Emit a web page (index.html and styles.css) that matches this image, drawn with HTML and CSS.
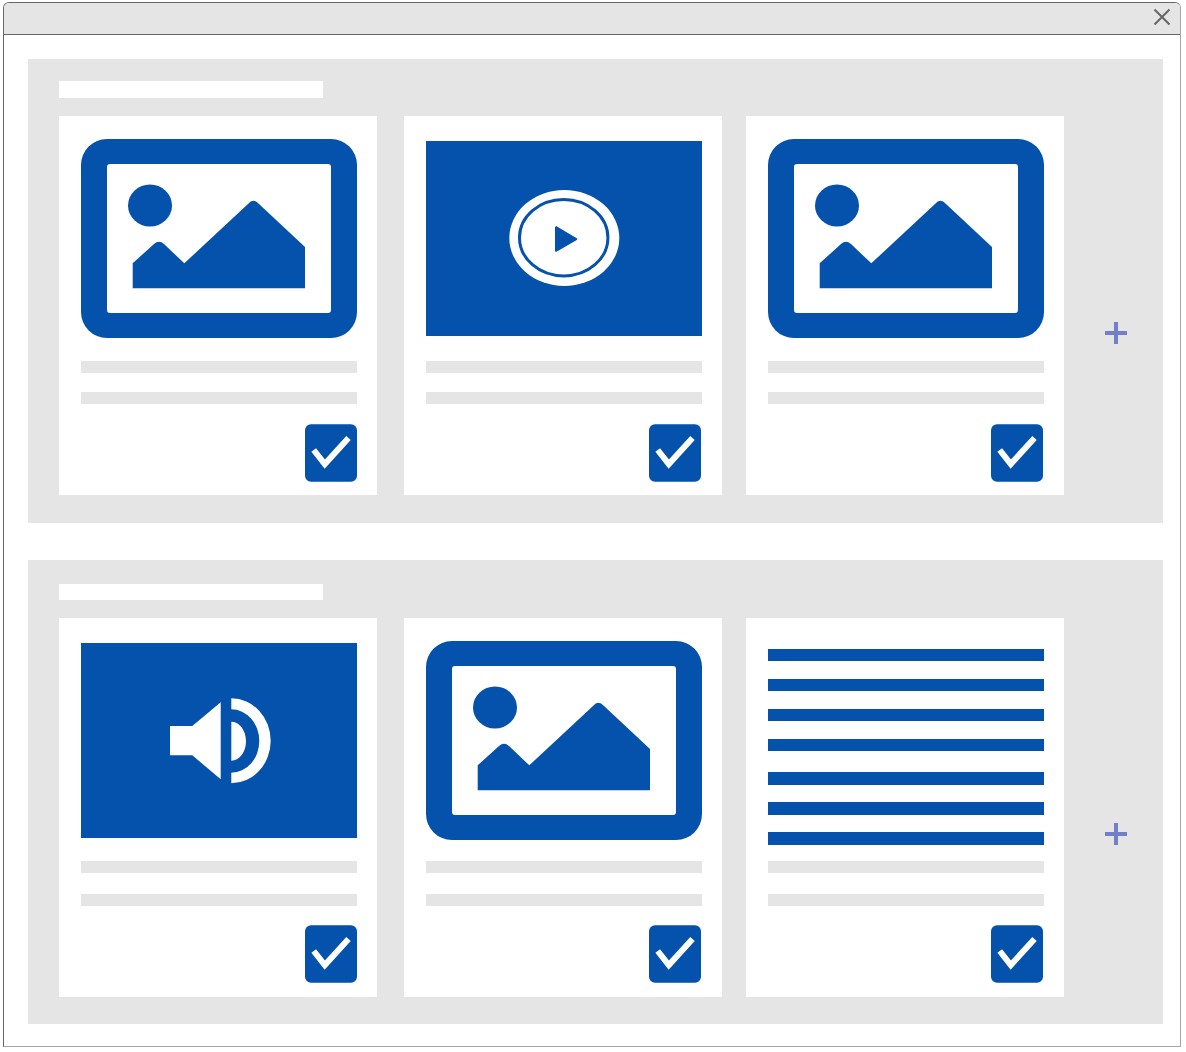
FILE: index.html
```html
<!DOCTYPE html>
<html lang="en">
<head>
    <meta charset="UTF-8">
    <title>Media picker</title>
    <link rel="stylesheet" href="styles.css">
</head>
<body>
    <svg class="sprites" width="0" height="0">
        <symbol id="icon-image" viewBox="0 0 276 199">
            <path fill="#0552ac" fill-rule="evenodd" d="M26 0H250A26 26 0 0 1 276 26V173A26 26 0 0 1 250 199H26A26 26 0 0 1 0 173V26A26 26 0 0 1 26 0ZM29 25A3 3 0 0 0 26 28V171A3 3 0 0 0 29 174H247A3 3 0 0 0 250 171V28A3 3 0 0 0 247 25Z"/>
            <ellipse fill="#0552ac" cx="69" cy="66.5" rx="22" ry="21"/>
            <path fill="#0552ac" d="M51.7 124.3L73 105Q78 100.5 83 105L103.3 124.3L167 65Q172.3 58.5 178 65L224 108V149.3H51.7Z"/>
        </symbol>
        <symbol id="icon-check" viewBox="0 0 52 58">
            <rect fill="#0552ac" y="0.3" width="52" height="57.5" rx="6"/>
            <path fill="none" stroke="#fff" stroke-width="6" d="M8.7 26L19.8 40L43.5 14"/>
        </symbol>
        <symbol id="icon-plus" viewBox="0 0 22 22">
            <path fill="#7180c8" d="M9 0H13V9H22V13H13V22H9V13H0V9H9Z"/>
        </symbol>
    </svg>

    <div class="window">
        <div class="titlebar">
            <svg class="close" width="18" height="18" viewBox="0 0 18 18">
                <path fill="none" stroke="#666" stroke-width="2" d="M1.5 1.5L16.5 16.5M16.5 1.5L1.5 16.5"/>
            </svg>
        </div>

        <div class="section section-a">
            <div class="section-title"></div>
            <div class="card-row">
                <div class="card">
                    <div class="media">
                        <svg class="media-icon" width="276" height="199"><use href="#icon-image"/></svg>
                    </div>
                    <div class="bars"><div class="bar"></div><div class="bar"></div></div>
                    <svg class="check" width="52" height="58"><use href="#icon-check"/></svg>
                </div>
                <div class="card card-middle">
                    <div class="media">
                        <svg class="media-block" width="276" height="195" viewBox="0 0 276 195">
                            <rect fill="#0552ac" width="276" height="195"/>
                            <ellipse fill="#fff" cx="138.3" cy="97" rx="55" ry="48"/>
                            <ellipse fill="none" stroke="#0552ac" stroke-width="3" cx="137.7" cy="96.7" rx="44.2" ry="38.2"/>
                            <polygon fill="#0552ac" stroke="#0552ac" stroke-width="2" stroke-linejoin="round" points="130,86.2 130,109.8 150.3,98.2"/>
                        </svg>
                    </div>
                    <div class="bars"><div class="bar"></div><div class="bar"></div></div>
                    <svg class="check" width="52" height="58"><use href="#icon-check"/></svg>
                </div>
                <div class="card">
                    <div class="media">
                        <svg class="media-icon" width="276" height="199"><use href="#icon-image"/></svg>
                    </div>
                    <div class="bars"><div class="bar"></div><div class="bar"></div></div>
                    <svg class="check" width="52" height="58"><use href="#icon-check"/></svg>
                </div>
                <svg class="plus" width="22" height="22"><use href="#icon-plus"/></svg>
            </div>
        </div>

        <div class="section section-b">
            <div class="section-title"></div>
            <div class="card-row">
                <div class="card">
                    <div class="media">
                        <svg class="media-block" width="276" height="195" viewBox="0 0 276 195">
                            <rect fill="#0552ac" width="276" height="195"/>
                            <path fill="#fff" d="M89 83H111.3L139.7 59.3V136.3L111.3 112.3H89Z"/>
                            <path fill="#fff" d="M150.3 55.3A39.4 42.5 0 0 1 150.3 140.3V129.7A28 31.7 0 0 0 150.3 66.3Z"/>
                            <path fill="#fff" d="M150.3 78.7A14.7 19.5 0 0 1 150.3 117.7Z"/>
                        </svg>
                    </div>
                    <div class="bars"><div class="bar"></div><div class="bar"></div></div>
                    <svg class="check" width="52" height="58"><use href="#icon-check"/></svg>
                </div>
                <div class="card card-middle">
                    <div class="media">
                        <svg class="media-icon" width="276" height="199"><use href="#icon-image"/></svg>
                    </div>
                    <div class="bars"><div class="bar"></div><div class="bar"></div></div>
                    <svg class="check" width="52" height="58"><use href="#icon-check"/></svg>
                </div>
                <div class="card">
                    <div class="media doc">
                        <div class="doc-line"></div>
                        <div class="doc-line"></div>
                        <div class="doc-line"></div>
                        <div class="doc-line"></div>
                        <div class="doc-line"></div>
                        <div class="doc-line"></div>
                        <div class="doc-line"></div>
                    </div>
                    <div class="bars"><div class="bar"></div><div class="bar"></div></div>
                    <svg class="check" width="52" height="58"><use href="#icon-check"/></svg>
                </div>
                <svg class="plus" width="22" height="22"><use href="#icon-plus"/></svg>
            </div>
        </div>
    </div>
</body>
</html>
```

FILE: styles.css
```css
body {
    margin: 0;
    background-color: #fff;
    font-family: "Liberation Sans", Arial, sans-serif;
}
.sprites {
    display: block;
    height: 0;
}
.window {
    box-sizing: border-box;
    width: 1178px;
    height: 1045px;
    margin: 2px 0 0 3px;
    border: 1px solid #666;
    border-right-color: #a6a6a6;
    border-bottom-color: #a6a6a6;
    border-radius: 6px 6px 0 0;
    overflow: hidden;
}
.titlebar {
    box-sizing: border-box;
    height: 32px;
    background-color: #e5e5e5;
    border-bottom: 1px solid #666;
    display: flex;
    justify-content: flex-end;
    align-items: flex-start;
    padding: 5px 9.5px 0 0;
}
.close {
    display: block;
}
.section {
    box-sizing: border-box;
    width: 1135px;
    height: 464px;
    margin: 24px 0 0 24px;
    padding: 22px 0 0 30.7px;
    background-color: #e5e5e5;
}
.section-b {
    margin-top: 37px;
    padding-top: 23.7px;
}
.section-title {
    width: 264.6px;
    height: 16.7px;
    background-color: #fff;
    margin-bottom: 18.3px;
}
.section-b .section-title {
    margin-bottom: 17.6px;
}
.card-row {
    display: flex;
    align-items: flex-start;
}
.card {
    box-sizing: border-box;
    width: 318px;
    height: 379px;
    margin-right: 24px;
    padding: 23.5px 20px 0 22px;
    background-color: #fff;
    display: flex;
    flex-direction: column;
}
.card-middle {
    margin-left: 3px;
}
.media {
    flex: none;
    height: 221.5px;
}
.section-b .media {
    height: 219.5px;
}
.media-icon {
    display: block;
}
.media-block {
    display: block;
    margin-top: 1.5px;
}
.doc {
    display: flex;
    flex-direction: column;
    gap: 17.5px;
    padding-top: 7.2px;
    box-sizing: border-box;
}
.doc-line {
    flex: none;
    height: 12.5px;
    background-color: #0552ac;
}
.doc-line:nth-child(5) {
    margin-top: 3.5px;
}
.bars {
    display: flex;
    flex-direction: column;
    gap: 18.7px;
}
.section-b .bars {
    gap: 20.7px;
}
.bar {
    height: 12.3px;
    background-color: #e5e5e5;
}
.check {
    display: block;
    align-self: flex-end;
    margin: 20px 1px 0 0;
}
.section-b .check {
    margin-top: 19px;
}
.card:first-child .check {
    margin-right: 0;
}
.plus {
    display: block;
    margin: 206px 0 0 17px;
}
.section-b .plus {
    margin-top: 205px;
}
```
